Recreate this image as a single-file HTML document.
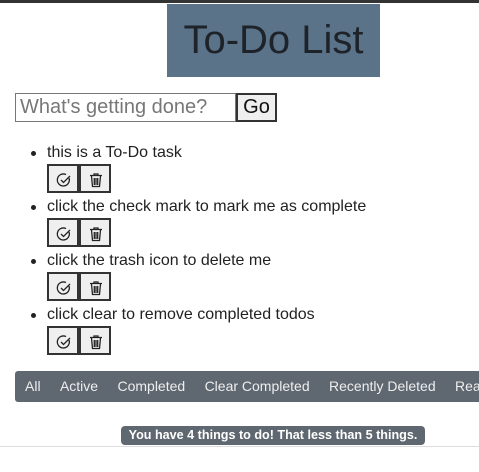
<!DOCTYPE html><html><head><style>
body{margin:0;width:479px;height:472px;overflow:hidden;background:#fff;font-family:"Liberation Sans",sans-serif;position:relative}
.top{position:absolute;left:0;top:0;width:479px;height:3px;background:#333}
.title{position:absolute;left:167px;top:4px;width:213px;height:73px;background:#5a7389;color:#1d2329;font-size:40px;line-height:73px;text-align:center}
.inp{position:absolute;left:15px;top:93px;font-size:20px;color:#777;line-height:27px;padding-left:4px;box-sizing:border-box;width:221px;height:29px;border:1px solid #777}
.go{position:absolute;left:236px;top:93px;width:41px;height:29px;box-sizing:border-box;border:2px solid #333;background:#efefef;font-size:20px;text-align:center;line-height:25px;color:#111}
.item{position:absolute;left:47px;font-size:16px;color:#222}
.item:before{content:"";position:absolute;left:-16px;top:7px;width:5px;height:5px;border-radius:50%;background:#222}
.b{position:absolute;width:32px;height:29px;box-sizing:border-box;border:2px solid #333;background:#efefef}
.b svg{position:absolute;left:7px;top:6px}
.nav{position:absolute;left:15px;top:371px;width:470px;height:31px;background:#5f6770;border-radius:3px;color:#eee;font-size:14px;line-height:31px;white-space:nowrap}
.nav span{margin-left:10px;margin-right:9.4px}
.foot{position:absolute;left:121px;top:426px;width:304px;height:19px;background:#5f6770;border-radius:4px;color:#fff;font-weight:bold;font-size:12.6px;line-height:19px;text-align:center}
.line{position:absolute;left:0;top:446px;width:479px;height:1px;background:#ddd}
</style></head><body>
<div class="top"></div>
<div class="title">To-Do List</div>
<div class="inp">What's getting done?</div>
<div class="go">Go</div>
<div class="item" style="top:144px">this is a To-Do task</div>
<div class="item" style="top:198px">click the check mark to mark me as complete</div>
<div class="item" style="top:252px">click the trash icon to delete me</div>
<div class="item" style="top:306px">click clear to remove completed todos</div>
<div class="nav"><span>All</span><span>Active</span><span>Completed</span><span>Clear Completed</span><span>Recently Deleted</span><span>Rea</span></div>
<div class="foot">You have 4 things to do! That less than 5 things.</div>
<div class="line"></div>
<div class="b" style="left:47px;top:164px"><svg width="16" height="16" viewBox="0 0 16 16"><path d="M13 6A6 6 0 1 1 10 2.6" fill="none" stroke="#222" stroke-width="1.3"/><path d="M5 8l2.5 2.5L14 4" fill="none" stroke="#222" stroke-width="1.3"/></svg></div>
<div class="b" style="left:79px;top:164px"><svg width="16" height="16" viewBox="0 0 16 16"><path d="M2 3.5h12M6 3.5V2h4v1.5M3.5 4l1 10.5h7L12.5 4M6.3 6v7M8 6v7M9.7 6v7" fill="none" stroke="#222" stroke-width="1.3"/></svg></div>
<div class="b" style="left:47px;top:218px"><svg width="16" height="16" viewBox="0 0 16 16"><path d="M13 6A6 6 0 1 1 10 2.6" fill="none" stroke="#222" stroke-width="1.3"/><path d="M5 8l2.5 2.5L14 4" fill="none" stroke="#222" stroke-width="1.3"/></svg></div>
<div class="b" style="left:79px;top:218px"><svg width="16" height="16" viewBox="0 0 16 16"><path d="M2 3.5h12M6 3.5V2h4v1.5M3.5 4l1 10.5h7L12.5 4M6.3 6v7M8 6v7M9.7 6v7" fill="none" stroke="#222" stroke-width="1.3"/></svg></div>
<div class="b" style="left:47px;top:272px"><svg width="16" height="16" viewBox="0 0 16 16"><path d="M13 6A6 6 0 1 1 10 2.6" fill="none" stroke="#222" stroke-width="1.3"/><path d="M5 8l2.5 2.5L14 4" fill="none" stroke="#222" stroke-width="1.3"/></svg></div>
<div class="b" style="left:79px;top:272px"><svg width="16" height="16" viewBox="0 0 16 16"><path d="M2 3.5h12M6 3.5V2h4v1.5M3.5 4l1 10.5h7L12.5 4M6.3 6v7M8 6v7M9.7 6v7" fill="none" stroke="#222" stroke-width="1.3"/></svg></div>
<div class="b" style="left:47px;top:326px"><svg width="16" height="16" viewBox="0 0 16 16"><path d="M13 6A6 6 0 1 1 10 2.6" fill="none" stroke="#222" stroke-width="1.3"/><path d="M5 8l2.5 2.5L14 4" fill="none" stroke="#222" stroke-width="1.3"/></svg></div>
<div class="b" style="left:79px;top:326px"><svg width="16" height="16" viewBox="0 0 16 16"><path d="M2 3.5h12M6 3.5V2h4v1.5M3.5 4l1 10.5h7L12.5 4M6.3 6v7M8 6v7M9.7 6v7" fill="none" stroke="#222" stroke-width="1.3"/></svg></div>
</body></html>
